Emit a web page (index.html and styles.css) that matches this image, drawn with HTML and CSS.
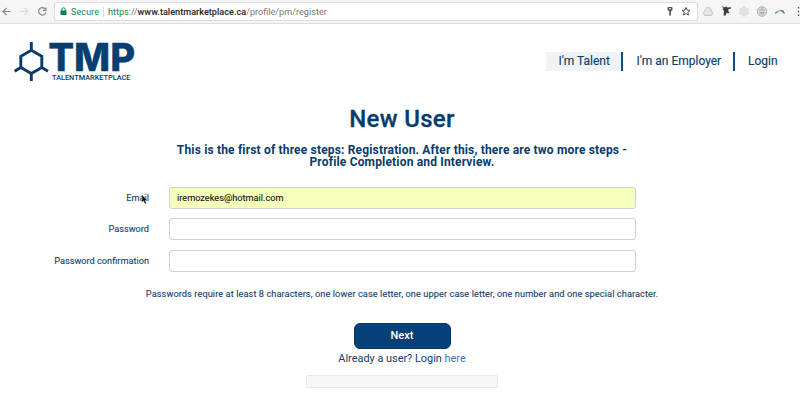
FILE: index.html
```html
<!DOCTYPE html>
<html lang="en">
<head>
<meta charset="utf-8">
<title>New User</title>
<link rel="stylesheet" href="styles.css">
</head>
<body>
<div class="browser">
  <svg class="controls" width="54" height="23" viewBox="0 0 54 23" fill="none" stroke-width="1.15">
    <path stroke="#888" d="M10.500 11.500H3M6.500 8L3 11.500L6.500 15"/>
    <path stroke="#d8d8d8" d="M20.500 11.500H28M24.500 8L28 11.500L24.500 15"/>
    <path stroke="#888" d="M45.400 9.300A3.700 3.700 0 1 0 45.900 12.300M46 7.500V10.300H43"/>
  </svg>
  <div class="address">
    <svg class="lock" width="7" height="9" viewBox="0 0 7 9"><path d="M1.800 4V2.500a1.700 1.700 0 0 1 3.400 0V4" fill="none" stroke="#0b8043"/><rect x=".5" y="3.500" width="6" height="4.500" rx=".5" fill="#0b8043"/></svg>
    <span class="secure">Secure</span>
    <span class="url"><span class="scheme">https</span>://<b>www.talentmarketplace.ca</b><span class="path">/profile/pm/register</span></span>
    <svg class="tools" width="26" height="11" viewBox="0 0 26 11">
      <path fill="#555" fill-rule="evenodd" d="M1.500 2Q1.500 1 2.500 1H5.500Q6.500 1 6.500 2V4L5 5.200V9.500H3.300V5.200L1.500 4zM3 2.300V3.200H5V2.300z"/>
      <path fill="none" stroke="#555" d="M20 1.400L21.100 4.100L24 4.300L21.800 6.200L22.500 9.100L20 7.500L17.500 9.100L18.200 6.200L16 4.300L18.900 4.100z"/>
    </svg>
  </div>
  <svg class="extensions" width="102" height="23" viewBox="0 0 102 23" fill="none">
    <path fill="#dedede" stroke="#cacaca" d="M8.500 7.500H11.500L15 13L13.500 15.500H6.500L5.500 13z"/><path stroke="#f4f4f4" d="M10 8L7 14M10 10L12.500 13H8"/>
    <path fill="#3c3c3c" d="M24 6L27 7.500L28 6.200L29.500 7.500L33 7.200V8.500L30.500 9.300L30.200 11L31.500 12.500L30 13.500L28.700 12.500L27.500 15.500H25.500L26 11L24.500 9L25.500 8.500z"/>
    <path stroke="#d4d4d4" d="M46 7L50 9.300V13.800L46 16L42 13.800V9.300z"/><path stroke="#d4d4d4" stroke-width=".8" d="M46 6V17M41.500 8.800L50.500 14.200M50.500 8.800L41.500 14.200"/><circle cx="46" cy="11.500" r="1.800" fill="#f5f5f5" stroke="#ccc"/>
    <circle cx="64" cy="11.500" r="4.700" fill="#ddd" stroke="#aaa"/><path stroke="#aaa" d="M61 10H67M61.500 12.500Q64 16 66.500 12.500zM64 7.500V10"/>
    <path stroke="#3489b8" stroke-width="1.300" d="M77 13.500L79.500 11.700"/><path stroke="#e59a36" stroke-width="1.400" d="M79.500 12Q82 9.500 84 11"/><path stroke="#347ab0" stroke-width="1.300" d="M83 10.500Q85 10.500 86.500 13.500"/>
    <path fill="#555" d="M99.800 7h1.400v1.400h-1.400zM99.800 10.800h1.400v1.400h-1.400zM99.800 14.600h1.400V16h-1.400z"/>
  </svg>
</div>
<header>
  <svg class="logo" width="124" height="43" viewBox="12 40 124 43">
    <path fill="none" stroke="#073b6b" stroke-width="2.900" d="M31.300 50.300L41.800 56.300V67.500L31.300 73.600L20.800 67.500V56.300zM31.300 42V50.300M41.800 67.500L48 71.200M20.800 67.500L14.600 71.200M31.300 73.600V81"/>
    <text class="brand" x="48.200" y="70.500" textLength="87" lengthAdjust="spacingAndGlyphs">TMP</text>
    <text class="tagline" x="52" y="80" textLength="78.500" lengthAdjust="spacingAndGlyphs">TALENTMARKETPLACE</text>
  </svg>
  <nav><a class="active">I'm Talent</a><a class="employer">I'm an Employer</a><a class="login">Login</a></nav>
</header>
<main>
  <h1>New User</h1>
  <h2>This is the first of three steps: Registration. After this, there are two more steps -<br>Profile Completion and Interview.</h2>
  <form>
    <label class="email">Email<svg class="cursor" width="7" height="11" viewBox="0 0 7 11"><path fill="#111" stroke="#fff" stroke-width=".4" d="M.8.500V8.500L2.600 6.900L4 10L5.500 9.300L4.200 6.400H6.500z"/></svg></label><div class="field filled">iremozekes@hotmail.com</div>
    <label>Password</label><div class="field"></div>
    <label>Password confirmation</label><div class="field"></div>
  </form>
  <p class="hint">Passwords require at least 8 characters, one lower case letter, one upper case letter, one number and one special character.</p>
  <button>Next</button>
  <p class="already">Already a user? Login <a>here</a></p>
  <div class="progress"></div>
</main>
</body>
</html>
```
FILE: styles.css
```css
* { box-sizing: border-box; }
body { margin: 0; width: 800px; height: 400px; overflow: hidden; background: #fff; color: #123d69; font-family: Roboto, sans-serif; }
.browser { display: flex; height: 24px; background: #f5f5f5; border-bottom: 1px solid #dedede; }
.address { display: flex; align-items: center; width: 644px; height: 19px; margin-top: 2px; padding: 0 5px; background: #fff; border: 1px solid #dedede; border-radius: 3px; font-size: 9.150px; white-space: nowrap; color: #777; }
.lock { margin-right: 4px; flex: none; }
.secure { width: 33px; padding-right: 4px; border-right: 1px solid #ddd; color: #16874b; font-size: 9px; letter-spacing: .1px; }
.url { margin-left: 4px; }
.url b { font-weight: 500; color: #222; }
.scheme { color: #16874b; }
.tools { margin-left: auto; }
header { display: flex; justify-content: space-between; height: 81px; padding: 16px 23px 0 12px; }
.logo { overflow: visible; }
.brand { font-family: Inter, sans-serif; font-size: 38.500px; font-weight: 800; fill: #073f70; stroke: #073f70; stroke-width: .3; }
.tagline { font-size: 7.800px; font-weight: 500; fill: #073b6b; }
nav { display: flex; height: 20px; margin-top: 12px; font-size: 12px; line-height: 19px; white-space: nowrap; -webkit-text-stroke: .15px; }
nav a { height: 19px; }
.active { width: 77px; padding-left: 12.500px; background: #eff3f5; border-right: 2px solid #124c7b; }
.employer { width: 112px; padding-left: 13.500px; border-right: 2px solid #124c7b; }
.login { width: 42px; padding-left: 13px; }
main { display: flex; flex-direction: column; align-items: center; padding-left: 4px; }
h1 { margin: 0; height: 39px; font-size: 24px; line-height: 29px; font-weight: 500; letter-spacing: .3px; -webkit-text-stroke: .3px; color: #073b6b; }
h2 { margin: 0; height: 43px; text-align: center; white-space: nowrap; font-size: 12px; line-height: 12px; font-weight: 700; letter-spacing: .17px; color: #073b6b; }
form { display: grid; grid-template-columns: 149px 467px; column-gap: 20px; row-gap: 9.250px; align-self: flex-start; margin-left: -4px; font-size: 9.200px; line-height: 21px; -webkit-text-stroke: .1px; }
label { position: relative; justify-self: end; }
.cursor { position: absolute; left: 15px; top: 7px; }
.field { height: 22px; padding-left: 7px; background: #fff; border: 1px solid #d0d0d0; border-radius: 3px; line-height: 20px; }
.filled { background: #f7ffbd; color: #111; }
p { margin: 0; white-space: nowrap; }
.hint { margin-top: 16px; height: 35.500px; font-size: 9.200px; line-height: 12px; letter-spacing: .09px; -webkit-text-stroke: .1px; }
button { width: 97px; height: 26px; padding: 0; border: 1px solid #073763; border-radius: 6px; background: #064078; color: #fff; font: 500 11px/24px Roboto, sans-serif; }
.already { height: 26px; font-size: 10.900px; line-height: 20px; }
.already a { color: #3979b5; }
.progress { width: 192px; height: 13px; background: #f6f6f6; border: 1px solid #e8e8e8; border-radius: 2px; }
```
